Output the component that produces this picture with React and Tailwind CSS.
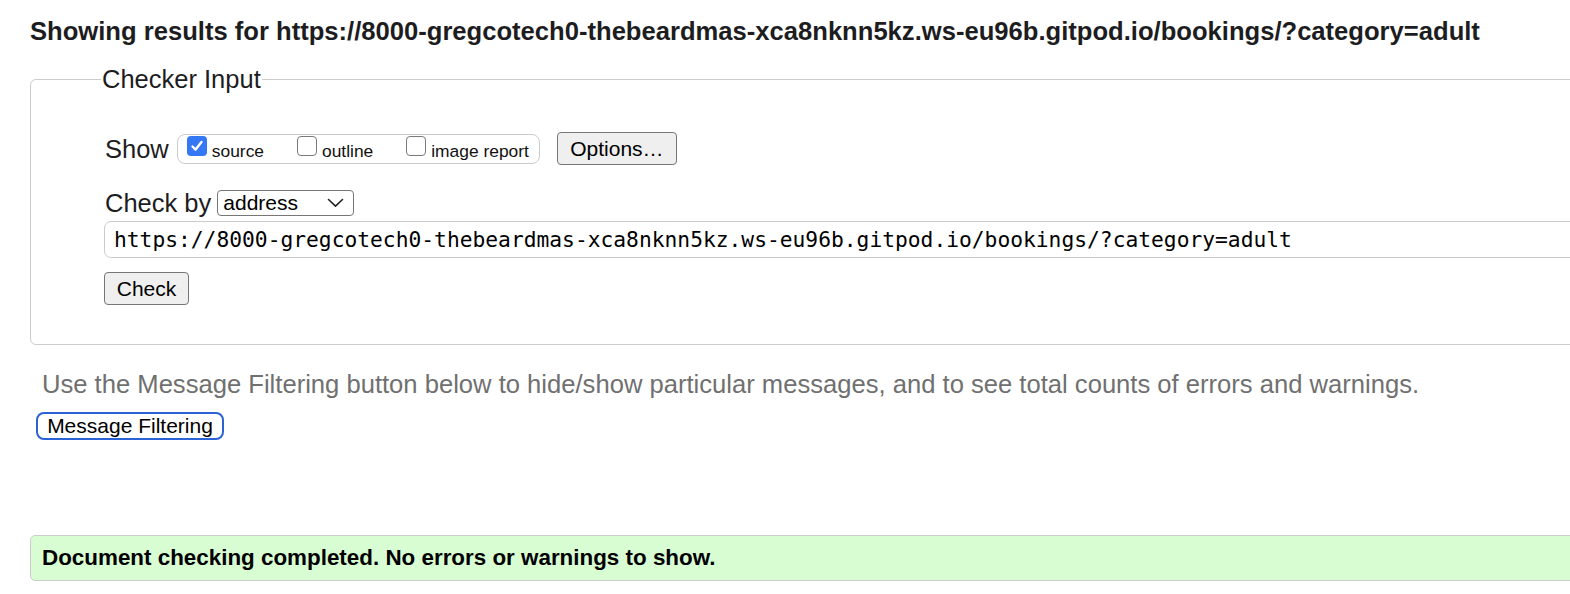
import { useState } from "react";

const url =
  "https://8000-gregcotech0-thebeardmas-xca8nknn5kz.ws-eu96b.gitpod.io/bookings/?category=adult";

function Box({ checked }) {
  if (checked) {
    return (
      <span className="flex h-[20px] w-[20px] shrink-0 items-center justify-center rounded-[4px] bg-[#3478f6]">
        <svg width="14" height="14" viewBox="0 0 14 14" fill="none">
          <path
            d="M2.5 7.5 L5.6 10.6 L11.5 3"
            stroke="white"
            strokeWidth="2.4"
            strokeLinecap="round"
            strokeLinejoin="round"
          />
        </svg>
      </span>
    );
  }
  return (
    <span className="block h-[20px] w-[20px] shrink-0 rounded-[4px] border border-[#7a7a7a] bg-white" />
  );
}

function Option({ checked, label, last }) {
  return (
    <label className={`flex items-center gap-[5px] ${last ? "" : "mr-[33px]"}`}>
      <span className="-mt-[6px]">
        <Box checked={checked} />
      </span>
      <span className="pt-[4px] text-[17.4px] leading-[20px] text-[#111]">{label}</span>
    </label>
  );
}

export default function App() {
  const [show] = useState({ source: true, outline: false, images: false });

  return (
    <div className="flex h-[594px] w-[1570px] flex-col overflow-hidden bg-white font-['Liberation_Sans',Arial,sans-serif] text-[#1d1d1f]">
      <h2 className="ml-[30px] mt-[17px] whitespace-nowrap text-[25.6px] font-bold leading-[28px]">
        Showing results for {url}
      </h2>

      <fieldset className="ml-[30px] mt-[20px] w-[1600px] shrink-0 rounded-[6px] border border-[#cccccc] pb-[39px] pl-[74px]">
        <legend className="-ml-[4px] px-[1px] text-[25.5px] leading-[28px]">Checker Input</legend>

        <div className="mt-[39px] flex h-[33px] items-center">
          <span className="text-[25.5px] leading-[28px]">Show</span>
          <div className="ml-[8px] flex h-[30px] items-center rounded-[8px] border border-[#cccccc] pl-[9px] pr-[10px]">
            <Option checked={show.source} label="source" />
            <Option checked={show.outline} label="outline" />
            <Option checked={show.images} label="image report" last />
          </div>
          <button className="ml-[17px] h-[33px] w-[120px] rounded-[4px] border border-[#767676] bg-[#efefef] text-[21px] leading-[24px] text-black">
            Options…
          </button>
        </div>

        <div className="mt-[24px] flex h-[28px] items-center">
          <span className="text-[25.5px] leading-[28px]">Check by</span>
          <div className="ml-[6px] flex h-[26px] w-[137px] items-center justify-between rounded-[4px] border border-[#767676] bg-white pl-[5px] pr-[9px]">
            <span className="text-[21px] leading-[24px] text-black">address</span>
            <svg width="17" height="10" viewBox="0 0 17 10" fill="none">
              <path d="M1.5 1.5 L8.5 8.2 L15.5 1.5" stroke="#222" strokeWidth="1.6" strokeLinecap="round" strokeLinejoin="round" />
            </svg>
          </div>
        </div>

        <div className="-ml-[1px] mt-[4px] flex h-[37px] w-[1490px] items-center rounded-[7px] border border-[#cccccc] pl-[9px]">
          <span className="whitespace-nowrap font-['DejaVu_Sans_Mono',monospace] text-[21.27px] leading-[24px] text-black">
            {url}
          </span>
        </div>

        <button className="-ml-[1px] mt-[14px] h-[33px] w-[85px] rounded-[4px] border border-[#767676] bg-[#efefef] text-[21px] leading-[24px] text-black">
          Check
        </button>
      </fieldset>

      <p className="ml-[42px] mt-[25px] whitespace-nowrap text-[25.6px] leading-[28px] text-[#707070]">
        Use the Message Filtering button below to hide/show particular messages, and to see total counts of errors and warnings.
      </p>

      <div className="ml-[36px] mt-[14px]">
        <button className="h-[28px] w-[188px] rounded-[8px] border-2 border-[#2b62d6] bg-white text-[21px] leading-[24px] text-black">
          Message Filtering
        </button>
      </div>

      <div className="ml-[30px] mt-[95px] flex h-[46px] w-[1600px] shrink-0 items-center rounded-[5px] border border-[#cccccc] bg-[#d8fdd3] pl-[11px]">
        <span className="text-[22.4px] font-bold leading-[26px] text-black">
          Document checking completed. No errors or warnings to show.
        </span>
      </div>
    </div>
  );
}
